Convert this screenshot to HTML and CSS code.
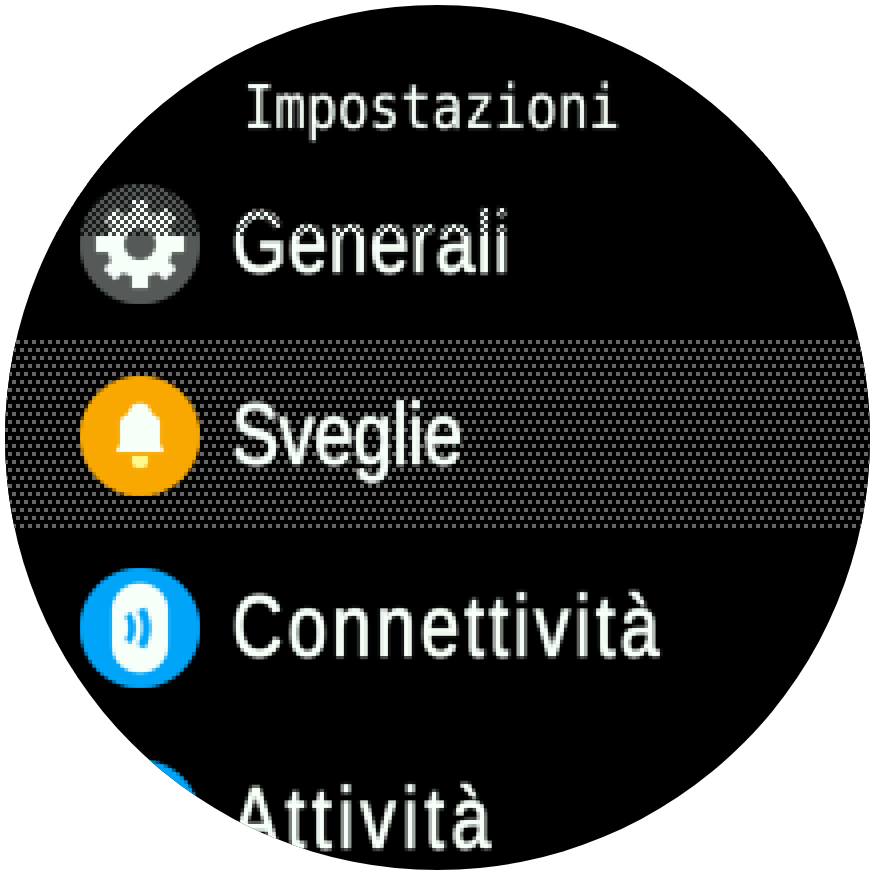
FILE: index.html
```html
<!DOCTYPE html>
<html lang="it">
<head>
<meta charset="utf-8">
<title>Impostazioni</title>
<link rel="stylesheet" href="styles.css">
</head>
<body>
<svg class="defs" aria-hidden="true">
  <filter id="pix" x="0" y="0" width="100%" height="100%" primitiveUnits="userSpaceOnUse" color-interpolation-filters="sRGB">
    <feGaussianBlur in="SourceGraphic" stdDeviation="1" result="soft"/>
    <feFlood x="1" y="1" width="2" height="2" flood-color="#000"/>
    <feComposite x="0" y="0" width="4" height="4"/>
    <feTile result="grid"/>
    <feComposite in="soft" in2="grid" operator="in"/>
    <feMorphology operator="dilate" radius="1"/>
  </filter>
</svg>
<main class="watch">
  <h1 class="title"><span class="title-text">Impostazioni</span></h1>
  <ul class="menu">
    <li class="row row-faded">
      <svg class="icon" viewBox="0 0 120 120" aria-hidden="true">
        <circle cx="60" cy="60" r="60" fill="#555a58"/>
        <g fill="#f6fff8">
          <circle cx="60" cy="60" r="33"/>
          <rect x="52" y="16" width="16" height="88"/>
          <rect x="16" y="52" width="88" height="16"/>
          <rect x="52" y="17" width="16" height="86" transform="rotate(45 60 60)"/>
          <rect x="52" y="17" width="16" height="86" transform="rotate(-45 60 60)"/>
        </g>
        <circle cx="60" cy="60" r="16" fill="#555a58"/>
      </svg>
      <span class="label"><span class="label-text label-generali">Generali</span></span>
    </li>
    <li class="row row-active">
      <svg class="icon" viewBox="0 0 120 120" aria-hidden="true">
        <circle cx="60" cy="60" r="60" fill="#f8a800"/>
        <path d="M36 76 L40 68 V48 Q40 42 48 38 L52 30 Q60 24 68 30 L72 38 Q80 42 80 48 V68 L84 76Z" fill="#f6fff8"/>
        <path d="M52 80 H68 V84 Q68 92 60 92 Q52 92 52 84Z" fill="#fdfb90"/>
      </svg>
      <span class="label"><span class="label-text label-sveglie">Sveglie</span></span>
    </li>
    <li class="row">
      <svg class="icon" viewBox="0 0 120 120" aria-hidden="true">
        <circle cx="60" cy="60" r="60" fill="#00a4f8"/>
        <rect x="32" y="15" width="56" height="90" rx="28" fill="#f6fff8"/>
        <g fill="none" stroke="#00a4f8">
          <path d="M48 46 Q56 60 48 74" stroke-width="7.5"/>
          <path d="M61 41 Q72 60 61 79" stroke-width="9"/>
        </g>
      </svg>
      <span class="label"><span class="label-text label-connettivita">Connettività</span></span>
    </li>
    <li class="row">
      <svg class="icon" viewBox="0 0 120 120" aria-hidden="true">
        <circle cx="60" cy="60" r="60" fill="#00a4f8"/>
      </svg>
      <span class="label"><span class="label-text label-attivita">Attività</span></span>
    </li>
  </ul>
</main>
</body>
</html>
```
FILE: styles.css
```css
html, body {
  margin: 0;
  padding: 0;
  background: #fff;
}

.defs {
  position: absolute;
  width: 0;
  height: 0;
}

.watch {
  width: 872px;
  height: 872px;
  padding-top: 72px;
  box-sizing: border-box;
  overflow: hidden;
  background: #000;
  color: #f6fff8;
  clip-path: circle(432.5px at 437.5px 437.5px);
}

.title {
  margin: 0;
  height: 76px;
  padding-right: 8px;
  box-sizing: border-box;
  text-align: center;
  font: 400 60px/70px "DejaVu Sans Mono", monospace;
  filter: url(#pix);
}

.title-text {
  display: inline-block;
  transform: scaleX(0.87);
}

.menu {
  list-style: none;
  margin: 0;
  padding: 0;
}

.row {
  position: relative;
  display: flex;
  align-items: center;
  gap: 28px;
  height: 192px;
  padding-left: 80px;
}

.row-active::before {
  content: "";
  position: absolute;
  inset: 0 0 4px 0;
  background-color: #000;
  background-image:
    conic-gradient(from 0deg at 4px 4px, transparent 75%, #666 0),
    conic-gradient(from 0deg at 4px 4px, transparent 75%, #666 0);
  background-size: 8px 16px;
  background-position: 0 0, 4px 8px;
}

.row-faded::after {
  content: "";
  position: absolute;
  left: 0;
  right: 0;
  top: 0;
  height: 88px;
  background-image: conic-gradient(rgba(0,0,0,.72) 25%, transparent 0 50%, rgba(0,0,0,.72) 0 75%, transparent 0);
  background-size: 8px 8px;
}

.icon {
  position: relative;
  flex: none;
  width: 120px;
  height: 120px;
  filter: url(#pix);
}

.label {
  position: relative;
  flex: none;
  width: 480px;
  height: 120px;
  font: 400 88px/116px "Liberation Sans", sans-serif;
  filter: url(#pix);
}

.label-text {
  display: inline-block;
  padding-left: 5px;
  transform: scaleX(0.8);
  transform-origin: 0 50%;
  -webkit-text-stroke: 1.4px #f6fff8;
}

.label-generali { letter-spacing: 2px; }
.label-sveglie { letter-spacing: 0; }
.label-connettivita { letter-spacing: 6.3px; }
.label-attivita { letter-spacing: 8.4px; }
```
